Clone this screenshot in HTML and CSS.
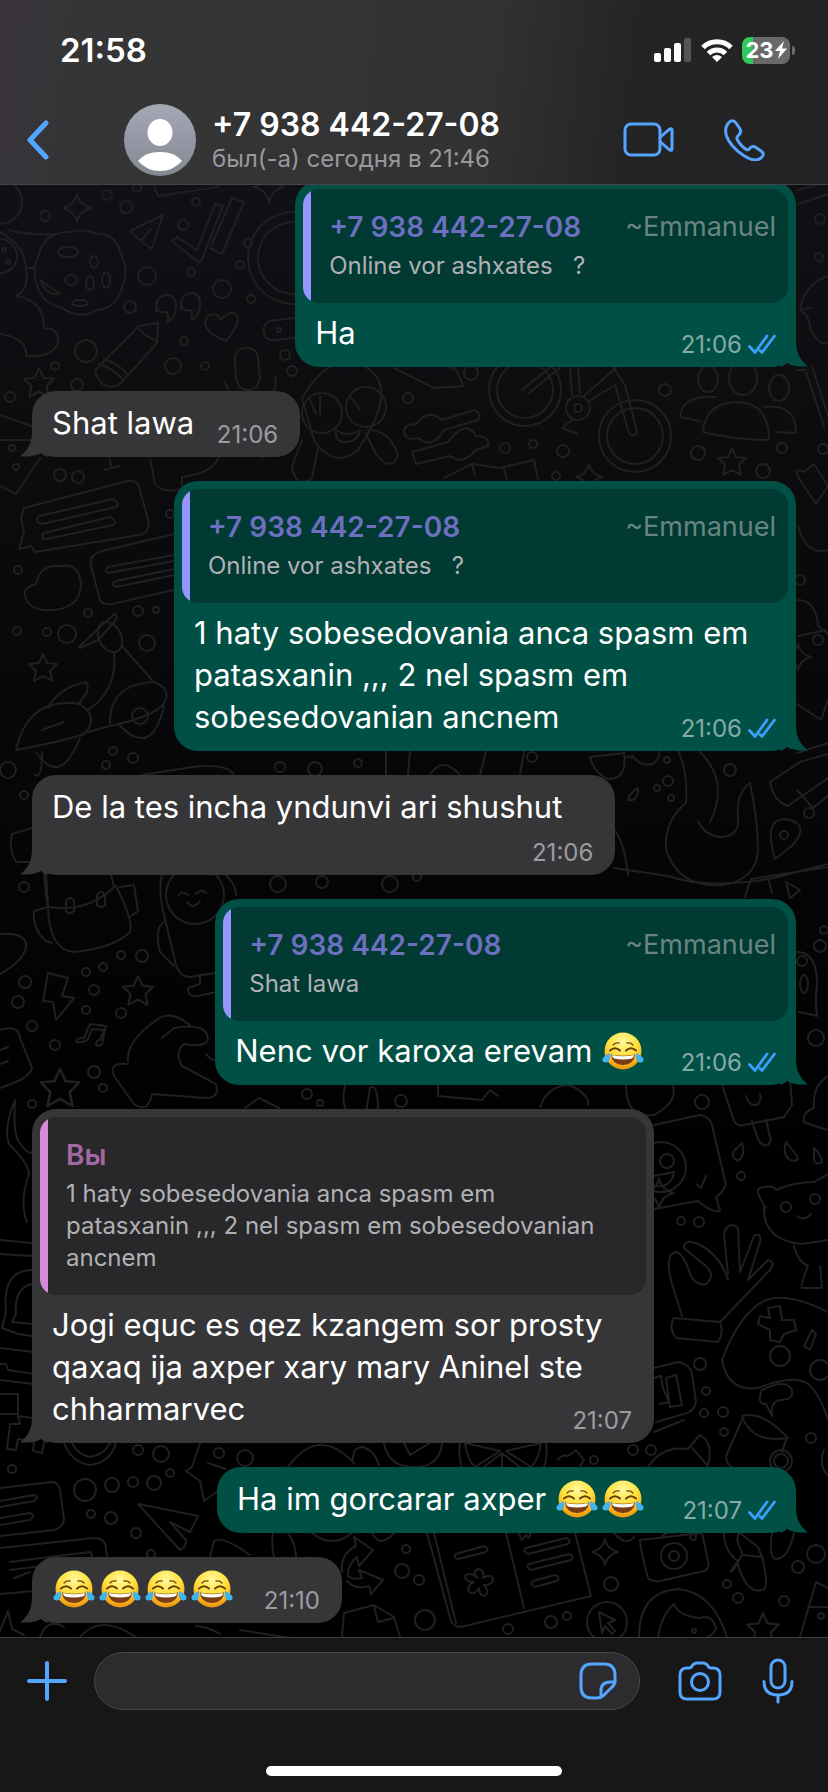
FILE: index.html
```
<!DOCTYPE html>
<html lang="ru">
<head>
<meta charset="utf-8">
<meta name="viewport" content="width=device-width, initial-scale=1">
<title>+7 938 442-27-08</title>
<link rel="stylesheet" href="styles.css">
</head>
<body>
<svg class="defs" width="0" height="0" aria-hidden="true">
  <defs>
    <radialGradient id="face" cx="50%" cy="25%" r="78%">
      <stop offset="0" stop-color="#fff9a0"/><stop offset=".5" stop-color="#fee13c"/><stop offset=".8" stop-color="#f9ae1c"/><stop offset="1" stop-color="#e08a0c"/>
    </radialGradient>
    <symbol id="joy" viewBox="0 0 46 42">
      <circle cx="22" cy="21" r="18.5" fill="url(#face)"/>
      <path d="M12 15q2-2.500 6-2M32 15q-2-2.500-6-2" fill="none" stroke="#7a4a08" stroke-width="1.4" stroke-linecap="round"/>
      <path d="M9 20.500q5-4.500 10 0M25 20.500q5-4.500 10 0" fill="none" stroke="#6a3c05" stroke-width="2" stroke-linecap="round"/>
      <path d="M10 24.500q12 2.500 24 0q-1 10.500-12 10.500T10 24.500z" fill="#7a3c12"/>
      <path d="M11 25q11 2.500 22 0q0 3-2 3.500q-9 2-18 0q-2-.5-2-3.500z" fill="#fff"/>
      <path d="M9 23q1 9-4 9.500q-4 0-3.500-3.500q1-3 7.500-6z" fill="#3fb4ee"/>
      <path d="M35 23q-1 9 4 9.500q4 0 3.500-3.500q-1-3-7.500-6z" fill="#3fb4ee"/>
    </symbol>
    <symbol id="ticks" viewBox="0 0 28 20">
      <path d="M1.500 12.500L7 18.500 19 2M12 16.500l2 2L26.500 2" fill="none" stroke="#3aa0fb" stroke-width="2.800" stroke-linecap="round" stroke-linejoin="round"/>
    </symbol>
    <symbol id="star" viewBox="-16 -16 32 32"><path d="M0-14l4 9 10 1-7 7 2 10-9-5-9 5 2-10-7-7 10-1z"/></symbol>
    <symbol id="spark" viewBox="-16 -16 32 32"><path d="M0-14q2 11 14 14q-12 3-14 14q-2-11-14-14q12-3 14-14z"/></symbol>
  </defs>
</svg>

<div class="screen">
  <header class="top">
    <div class="status">
      <time class="clock">21:58</time>
      <div class="indicators">
        <svg width="38" height="24" viewBox="0 0 38 24" aria-hidden="true"><g fill="#fff"><rect y="15" width="7" height="9" rx="2"/><rect x="10" y="10" width="7" height="14" rx="2"/><rect x="20" y="5" width="7" height="19" rx="2"/></g><rect x="30" width="7" height="24" rx="2" fill="#555556"/></svg>
        <svg width="32" height="24" viewBox="0 0 32 24" aria-hidden="true"><g fill="none" stroke="#fff" stroke-width="5"><path d="M2 9.500a20 20 0 0 1 28 0"/><path d="M7.500 15.500a12 12 0 0 1 17 0"/></g><path d="M16 24l-5-5q5-4 10 0z" fill="#fff"/></svg>
        <div class="battery"><span class="battery-level">23</span><svg width="12" height="18" viewBox="0 0 12 18" aria-hidden="true"><path d="M9 0L0 10h5L3 18l9-10.500H7z" fill="#fff"/></svg></div>
      </div>
    </div>
    <nav class="bar">
      <button class="icon back" aria-label="Назад"><svg width="24" height="40" viewBox="0 0 24 40"><path d="M20 3L4 20l16 17" stroke-width="5"/></svg></button>
      <svg class="avatar" viewBox="0 0 72 72" aria-hidden="true">
        <defs><linearGradient id="av" x2="0" y2="1"><stop stop-color="#a5a9b6"/><stop offset="1" stop-color="#838792"/></linearGradient></defs>
        <circle cx="36" cy="36" r="36" fill="url(#av)"/>
        <ellipse cx="36" cy="28.500" rx="12.500" ry="13.500" fill="#fff"/>
        <path d="M14 57q7-9 22-9t22 9q-9 10-22 10T14 57z" fill="#fff"/>
      </svg>
      <div class="contact">
        <h1>+7 938 442-27-08</h1>
        <p>был(-а) сегодня в 21:46</p>
      </div>
      <button class="icon video" aria-label="Видеозвонок"><svg width="52" height="36" viewBox="0 0 52 36"><rect x="2" y="2" width="35" height="31" rx="6"/><path d="M37 15.500L46 7.500q3-2 3 1v18q0 3-3 1L37 19.500"/></svg></button>
      <button class="icon" aria-label="Позвонить"><svg width="42" height="42" viewBox="0 0 42 42"><path d="M4 4.500C7 1 10 1 12 4l4 6c2 3 0 5-2 7-2 1.500-1 4 1 6.500 2 2.500 4 5 6.500 6.500 2 1.500 3 1 4.500-1 2-2 4-2 6-.5l5 3.500c3 2 3 4 .5 6.500-4 4-11 2.500-18-2C10 30 5 24 2.500 17 1 12 1.500 7.500 4 4.500z"/></svg></button>
    </nav>
  </header>

  <main class="chat">
    <svg class="doodles" viewBox="0 185 828 1452" preserveAspectRatio="xMidYMin slice" aria-hidden="true">
      <g>
        <circle cx="0" cy="202" r="22"/><path d="M8 230q25 6 50 4M0 232q26 14 26 38q4 18-10 26q28 4 28 32q16 0 14 16q-8 14-32 12q2-18-26-22M26 268h8"/>
        <circle cx="0" cy="256" r="17"/><circle cx="4" cy="250" r="2"/><circle cx="8" cy="262" r="2"/>
        <path d="M40 250q8-18 28-18q14-4 30 2q18 0 22 18q10 18 2 36q-6 20-24 22q-18 10-36-2q-18-4-24-20q-8-18 2-36z"/>
        <ellipse cx="68" cy="252" rx="10" ry="5"/><ellipse cx="94" cy="262" rx="4" ry="6"/><ellipse cx="71" cy="280" rx="6" ry="5"/><ellipse cx="90" cy="283" rx="4" ry="7"/><ellipse cx="106" cy="280" rx="4" ry="8"/><ellipse cx="80" cy="303" rx="8" ry="3"/><path d="M40 280l20 14q-14 2-20-14z"/>
        <path d="M130 231l33-16-11 34-10-7zM141 241l10-12M154 184l4 12 60-9 3-8M172 241l5-4 20 13 18-46 8 2-22 55-3 1zM212 244l20-46 12 4-22 52-12-6"/>
        <path d="M156 312q-1-17 11-17 10 1 9 13-1 11-9 14q3-10-2-10-9 2-9-9M181 310q-1-17 11-17 9 1 8 13-1 11-9 14q3-10-2-10-8 2-8-9"/>
        <path d="M95 370l44-44 19-3-1 20-37 41q-10 6-17 0t-8-14zM99 364q14 4 24 16M104 359q14 4 24 16M138 327q4 8 19 14"/>
        <path d="M226 341q-20-8-21-18 2-11 12-8 3 2 4 5 8-10 15-6 6 8-10 27z"/>
        <path d="M294 212a43 43 0 0 0 0 92M294 222a35 35 0 0 0 0 72M294 318l-24 3q-8 4-6 12 2 8 10 7l20-2"/><circle cx="279" cy="330" r="2"/>
        <path d="M235 360q0-12 11-12t12 10l2 20q-2 12-12 12t-12-12zM225 382q6 20 26 20t25-18l-1-8M262 458l6-26"/>
        <path d="M0 440h34M0 415l34 12M0 486l16 8 24-36M104 470l16-4M112 468l-4-14M150 460q4 14 4 22 6 12 28 7v-12q34-4 38-24"/>
        <path d="M24 508l100-26q12-4 15 5l10 36q0 10-10 12l-104 17-4-6-12 3 5-17-3-14zM39 516l74-17q8 4 3 8l-74 17q-8-2-3-8zM44 533l66-16q8 4 3 8l-66 14q-8 0-3-6zM174 534l-72 17q-14 4-11 15l9 34q3 5 12 4l66-15M174 555l-66 12q-4 4 0 6l66-12M174 569l-58 12q-6 3 0 6l58-12"/>
        <path d="M36 584q4-20 24-18 20-4 21 20-2 22-28 24-24 2-28-14-3-8 11-12z"/>
        <path d="M80 646l34-32q4 0 2 6l-18 20-18 8q-2-2 0-2z"/><ellipse cx="110" cy="637" rx="11" ry="16" transform="rotate(-28 110 637)"/><path d="M114 652q4 38-26 58M122 646l30 34M16 750q12-54 64-46 20 14 4 30-24 8-68 16zM48 708q10-20 38-26 6 8-8 22M110 726q-2-42 44-44 20 8 8 24-14 12-52 20M42 730l22-8M36 752q24 36 44-14M120 726q32 32 44-20M88 732l22-6"/>
        <circle cx="140" cy="716" r="8"/>
      </g>
      <g>
        <path d="M302 398q28-48 62-32q30 16 8 60l-14 24q-24 20-44-10zM302 440l-10 26q4 24 20 12l6-30M370 430q18 0 28 24-6 20-22 0l-10-20M336 430q12 8 24 0-2 12-14 12t-10-12M310 400l6 14M320 396v18M350 396l10 14"/><circle cx="322" cy="413" r="20"/><circle cx="366" cy="407" r="20"/>
        <path d="M394 368l40 20 30-2-8-16-12-6M404 430q2-6 12-6 12-16 26-4l32-10q8 2 4 10l-34 10q-12 20-26 8-14 4-14-8zM412 452l36-10q18-24 28-6 14 0 12 10l-12 4q-14 16-26 6l-34 8z"/>
        <circle cx="525" cy="390" r="36"/><circle cx="525" cy="390" r="28"/><circle cx="635" cy="436" r="36"/><circle cx="635" cy="436" r="28"/><circle cx="578" cy="408" r="12"/><circle cx="578" cy="408" r="4"/>
        <path d="M522 390l30-24M528 394l34-28M570 367l2 28M578 367l2 26M589 401l26-16 14 48q6 6 8-2l-12-46-12-18M584 396l34-30M572 420l-10 8 16 6"/>
        <ellipse cx="708" cy="379" rx="10" ry="13"/><ellipse cx="743" cy="378" rx="14" ry="17"/><ellipse cx="779" cy="388" rx="10" ry="13"/><path d="M703 432q2-30 36-30 30 2 30 38-34 0-66-8zM700 421l-20-4q2-22 36-20M764 407q32-4 32 26l-20-1M444 478l28-14 28 4 34-8 4 20M472 464l3 12M504 468l3 12"/>
        <path d="M798 190l30-8M798 204l30-10M800 310q4-26 28-34M800 310q10 6 10 18 10 20 18 14M800 310l12-2M806 372l18 54M812 366l16 50M796 370l10 0M800 480q-8-14 4-8l10-8 14 22-12 18zM798 526q8 30 30 24M798 600q18 0 20 26l10 8M798 636l28-6"/>
        <circle cx="800" cy="580" r="5"/><path d="M797 704l24 16 7-20M797 753l31-10M797 790l16 18 15-12"/>
      </g>
      <g>
        <path d="M590 757l34-4q4 26-16 26-14-6-18-22zM632 755q10 14 22 8 8-8 4-14M624 760q4-6 8-2M678 751q10 20 8 52-22 18-20 46 12 40 58 36 32-6 34-34 0-30-8-68-14 10-12 34 2 20-18 20-16-2-22-16"/>
        <path d="M700 752q30 30 10 70M770 782l30-20 28-8M770 782q4 20 18 24l40-28"/><circle cx="784" cy="835" r="4"/><path d="M775 859q-12-40 10-40 26 4 8 26zM628 800q2-8 10-12 0 14-10 12z"/>
        <path d="M614 830q10 10 14 45M614 868l54 8q40 14 106 2l54-14M745 897l6-18 77-12M768 878l4 15M786 882l14 8-10 8z"/>
        <path d="M42 752q0 30-8 22M142 775l50-8q40-4 42 10M386 751v24M410 751l-2 24M430 775q12-20 30 0M480 775l6-24M520 775l4-24"/>
        <path d="M32 828l-20 6q-4 14 4 28l16 0M44 871q2 30 4 36l-14 4q-2 18 12 30l6 2M48 907q40 6 66-20l-4-16M48 907l-2-36M48 910q2 40 26 42 40-4 56-20 4-10-14-46M120 887l14-2 4 26-8 6"/>
        <path d="M66 901q4-6 8 0v10q-4 4-8 0zM97 895q4-6 8 0v10q-4 4-8 0z"/>
        <circle cx="195" cy="895" r="29"/><path d="M178 896q4-6 10-1M196 894q6-6 10-1M187 902q6 8 13-1M162 875q-4 14 2 40l12 50q4 12 14 12l26-4M216 974v10M200 974v10l-12 4q0 10 10 8l18-4M164 922q-10 6-4 30l14 14M226 875q10 10 10 20"/>
        <path d="M48 973l20 5-6 18 12 2-18 22-3-18-10-1zM0 934q28-2 26 14-4 14-26 26M76 1042q0-4 8-4l6-14 16 2-4 18q-4 4-6 0 0-4 4-4l4-10-12-1-4 10q-4 4-12 3z"/>
        <path d="M128 1061q-2-20 30-42 14-10 34 8M162 1038l12-10q34-6 34 12-4 8-24 4-10 8-2 22l34 18q4 14-10 14l-54-4q-4 20-18 10l-20-28q-6-14 14-12M206 1054q6 8 14 6M0 1030q18-6 20 8l12 30q-2 8-16 14l-16 6M0 1050l8-3M0 1064l8-3"/>
        <path d="M15 1100q-12 30-6 44 20 20 20 30-10 28-2 48M15 1100q-2 34 4 42 10 14 13 10M0 1240l32 3M0 1254l32 2M245 1108l14-10 20 10M345 1086q-4 14 2 26M366 1112l4-24q8-6 8 24M438 1086v10l44 4 8-10 8 6"/>
        <path d="M497 1077h4M518 1070q2 4 20 4M540 1107q8-22 30-22 20 10 18 20M626 1085q0 34 28 30 26-14 18-32M722 1085l12 36q4 6 10 4l40-8 8-12-2-28M752 1121l6 18q4 8 10 6 4-4 2-8l-4-18M746 1096q4 12 12 8 4-4 2-10M828 1130q-14-4-24-8-2-10 10-14-2-22 14-32"/>
        <path d="M797 952q20 0 20 32-2 18 0 32l-18-4"/><ellipse cx="804" cy="984" rx="4" ry="9"/><circle cx="802" cy="961" r="5"/>
        <path d="M654 1125l46-10q10 2 12 10l14 60q-4 8-10 12l4 14q-8 2-22-10l-44 8"/><circle cx="661" cy="1167" r="25"/><circle cx="667" cy="1161" r="7"/><path d="M654 1176l20-4q-2 16-20 14M696 1184l5 4 5-12M742 1143l-8 8q-4 6 4 10 8-6 4-18zM786 1142q8 10 12 16 0 4-8 2-8-6-4-18zM814 1148q8 8 8 14-6 4-8-2z"/>
        <path d="M766 1208q-12-18-6-20 14-4 16 2 18-8 38-8l14-8M764 1206q-2 34 38 38l26-4M794 1246q4 16 14 20-8 20-6 22h20l-2-22"/><circle cx="786" cy="1207" r="5"/><circle cx="815" cy="1199" r="5"/><path d="M797 1216q6 6 14-2"/>
        <path d="M682 1316l-10-32q-8-30 4-32 8 2 14 22 6 12 16 10 10-8 0-18l-22-18q0-10 14-4 22 10 30 36M728 1274l-4-40q4-14 14-6l2 44 14-36q8-4 6 6l-12 38 20-20q8 2 2 10l-50 52M674 1318l46 4q4 10-2 20l-42-4q-8-10-2-20z"/>
        <path d="M828 1312q-40-20-62-12-26 12-44 60 6 32 36 28 36-14 50-4 12 10 20 36M768 1308l12-2 2 14 12 0 2 10-12 4-4 8-10-2v-10l-12-6 2-8 10 2z"/><circle cx="780" cy="1356" r="10"/><circle cx="820" cy="1370" r="10"/><path d="M804 1346l8-16 4 4-6 16z"/>
        <path d="M654 1368l24-6q12 2 14 12l4 28q-2 10-12 12l-28 8M654 1378l7-2 2 12 6 14-9 2M666 1378l10-3 6 30-12 2z"/>
        <path d="M772 1416l-6-12q-10 0-4-14 24-12 30 0 2 10-12 10-10 2-8 16M742 1416q20-6 46 22-36 6-46-22M742 1420l-16 36q0 8 6 11M786 1440l-4 12"/><circle cx="781" cy="1461" r="7"/><circle cx="781" cy="1461" r="11"/>
      </g>
      <g>
        <path d="M32 1270q-30 0-26 42l-4 16 16 6 14 2M32 1284q-18 4-16 30l-4 8 20 2M0 1348l34 4M0 1364h6l2 6 26 4M0 1380l34 4M0 1394h18v20H0M10 1424l10 0-2-8 14 2M10 1424l-3 25 9 1 2-11 16 2-1 10 9 2 2-10"/>
        <path d="M64 1443q8 20 26 22 20-2 26-22M72 1443q6 12 18 14 14-2 20-14M200 1443l-8 24-6 4 14 10 4 20 14-10M226 1469l-18-6"/>
        <path d="M288 1467q30-42 66-4M384 1443q4 24 30 24t28-24M404 1443l6 12 20-12M353 1459q0-12 10-12 12 4 16 18M460 1443q-2 14 2 24M546 1443q2 14-2 24M465 1443q2 16 10 24l25-16zM541 1443q-2 16-10 24l-25-16zM484 1467l18-14 18 14M502 1453v14M558 1460q4-6 10-4l8-6 8 10-4 6M648 1467q14-22 40-18l12-14q14 8 8 30M692 1448l16 18M654 1432l30-12M824 1450q-6 14 4 26"/>
        <path d="M138 1504l60 12-8 16-20-10 16 18q0 8-6 10zM0 1488l52-6q6 0 8 8l4 30q-2 8-10 10l-54 6M0 1501l34-6q6 2 0 6l-34 6M0 1518l30-5q6 2 0 7l-30 5M0 1548l94-10q12 0 12 12l2 12M10 1562l80-10q4 4 0 8l-80 10M14 1578l16-6M0 1594l34-3M210 1557l4-16q8-6 36 14M273 1533q-2 12 1 24M288 1533q8 12 8 24M312 1533q20 16 40 0M372 1533q8 16 22 0"/>
        <path d="M342 1572q-2-18 14-26l-2-9 19 13-14 16-2-9q-10 8-9 19 4 4 14 2l-3-8 24 10-12 14-2-8q-14 4-22-5M427 1533l24 88q4 8 14 5l126-30-16-63M434 1533l22 90M506 1533l18 75M456 1554l28-8q6 2 2 6l-28 7q-6-1-2-5zM526 1548l40-10q6 2 2 6l-40 10q-6-2-2-6zM529 1564l40-10q6 2 2 6l-40 10q-6-2-2-6zM533 1581l22-6q6 2 2 6l-22 6q-6-2-2-6zM518 1532l4 8 4-5 3 3 3-8"/>
        <path d="M478 1578q-7-6 0-9 7 1 5 9 8-5 10 1 0 6-9 6 6 7 1 11-6 0-6-8-5 8-10 4-3-6 5-10-9 0-9-6 4-5 13 2zM342 1637l2-24 30-8 20 12 6 20M374 1606l4 16 16-4"/>
        <path d="M0 1631l8-20 4 18 12 6M40 1637q8-20 24-10M80 1637q20-24 56 0M196 1626q10 0 24 8M240 1630l50 8M640 1540l62-7M640 1540q0 8 8 38 4 4 12 3l44-10q6-2 4-10l-6-28M662 1537q2-5 12-4M614 1533q12 14 20 4"/>
        <path d="M724 1533q0 18 14 28-12 16-4 8l8-14 20 2-4-10-18-14q-6 4 2 20M762 1556q8 34 0 34-16 4-24-26M772 1533q-4 24 4 26 12 0 18-26"/>
        <circle cx="674" cy="1556" r="13"/><circle cx="674" cy="1556" r="5"/><circle cx="607" cy="1622" r="20"/><path d="M599 1612l16 8-7 3 7 8-3 3-7-8-3 7zM639 1637q0-46 40-48 34 4 48 48M674 1604q-12 10-16 33M674 1604q4 12 26 14 12-4 16 10-2 6-8 9M816 1582l12 6M816 1582l-16 55M808 1607h20"/>
      </g>
      <g>
        <circle cx="107" cy="195" r="5"/><circle cx="126" cy="207" r="6"/><circle cx="45" cy="216" r="5"/><circle cx="183" cy="225" r="5"/><circle cx="147" cy="276" r="9"/><circle cx="191" cy="272" r="4"/><circle cx="222" cy="289" r="9"/><circle cx="251" cy="299" r="4"/><circle cx="130" cy="307" r="6"/><circle cx="248" cy="243" r="4"/><circle cx="240" cy="265" r="4"/><circle cx="196" cy="202" r="4"/><circle cx="137" cy="188" r="4"/><circle cx="86" cy="351" r="11"/><circle cx="184" cy="341" r="4"/><circle cx="173" cy="366" r="8"/><circle cx="205" cy="366" r="4"/><circle cx="55" cy="366" r="4"/><circle cx="77" cy="385" r="6"/><circle cx="10" cy="397" r="5"/><circle cx="285" cy="355" r="5"/><circle cx="292" cy="371" r="5"/><circle cx="12" cy="448" r="3"/><circle cx="16" cy="467" r="3"/><circle cx="60" cy="475" r="6"/><circle cx="78" cy="477" r="6"/>
        <circle cx="408" cy="398" r="5"/><circle cx="471" cy="373" r="7"/><circle cx="665" cy="390" r="6"/><circle cx="505" cy="448" r="5"/><circle cx="533" cy="444" r="4"/><circle cx="563" cy="451" r="6"/><circle cx="698" cy="453" r="7"/><circle cx="782" cy="448" r="5"/><circle cx="763" cy="471" r="7"/><circle cx="823" cy="449" r="5"/><circle cx="556" cy="476" r="4"/><circle cx="820" cy="219" r="5"/><circle cx="819" cy="257" r="4"/><circle cx="818" cy="640" r="5"/>
        <circle cx="18" cy="570" r="4"/><circle cx="170" cy="514" r="4"/><circle cx="88" cy="613" r="4"/><circle cx="138" cy="611" r="5"/><circle cx="156" cy="610" r="3"/><circle cx="17" cy="631" r="4"/><circle cx="47" cy="632" r="4"/><circle cx="67" cy="634" r="9"/><circle cx="147" cy="643" r="8"/><circle cx="133" cy="758" r="5"/><circle cx="113" cy="751" r="4"/><circle cx="106" cy="765" r="4"/><circle cx="8" cy="770" r="8"/><circle cx="280" cy="767" r="5"/><circle cx="315" cy="769" r="7"/><circle cx="358" cy="763" r="4"/>
        <circle cx="532" cy="757" r="5"/><circle cx="667" cy="760" r="3"/><circle cx="668" cy="781" r="5"/><circle cx="657" cy="788" r="3"/><circle cx="671" cy="798" r="3"/><circle cx="730" cy="770" r="6"/><circle cx="809" cy="813" r="5"/><circle cx="24" cy="795" r="4"/><circle cx="24" cy="887" r="5"/><circle cx="278" cy="884" r="8"/><circle cx="322" cy="882" r="6"/><circle cx="390" cy="884" r="8"/><circle cx="417" cy="877" r="4"/>
        <circle cx="25" cy="982" r="6"/><circle cx="18" cy="1002" r="6"/><circle cx="121" cy="955" r="4"/><circle cx="142" cy="956" r="6"/><circle cx="86" cy="972" r="4"/><circle cx="103" cy="967" r="4"/><circle cx="94" cy="990" r="5"/><circle cx="86" cy="1010" r="4"/><circle cx="121" cy="1013" r="5"/><circle cx="32" cy="1026" r="5"/><circle cx="55" cy="1045" r="5"/><circle cx="94" cy="1072" r="6"/><circle cx="103" cy="1088" r="4"/><circle cx="32" cy="1104" r="4"/><circle cx="307" cy="1094" r="5"/><circle cx="320" cy="1103" r="3"/><circle cx="401" cy="1101" r="6"/><circle cx="702" cy="1102" r="7"/><circle cx="741" cy="1176" r="4"/><circle cx="681" cy="1221" r="4"/><circle cx="699" cy="1222" r="5"/><circle cx="820" cy="946" r="6"/><circle cx="816" cy="1038" r="8"/><circle cx="824" cy="930" r="4"/>
        <circle cx="700" cy="1364" r="6"/><circle cx="706" cy="1391" r="4"/><circle cx="704" cy="1413" r="4"/><circle cx="723" cy="1412" r="5"/><circle cx="724" cy="1432" r="4"/><circle cx="811" cy="1438" r="5"/><circle cx="633" cy="1450" r="5"/><circle cx="651" cy="1450" r="5"/><circle cx="594" cy="1460" r="4"/><circle cx="12" cy="1469" r="4"/><circle cx="138" cy="1450" r="5"/><circle cx="161" cy="1454" r="8"/><circle cx="219" cy="1453" r="5"/><circle cx="245" cy="1458" r="8"/><circle cx="170" cy="1473" r="4"/><circle cx="85" cy="1490" r="11"/><circle cx="112" cy="1485" r="7"/><circle cx="133" cy="1482" r="5"/><circle cx="154" cy="1483" r="7"/><circle cx="91" cy="1514" r="4"/><circle cx="111" cy="1518" r="6"/><circle cx="136" cy="1533" r="5"/><circle cx="151" cy="1554" r="4"/><circle cx="406" cy="1549" r="4"/><circle cx="402" cy="1571" r="7"/><circle cx="419" cy="1580" r="5"/><circle cx="425" cy="1620" r="10"/>
        <circle cx="508" cy="1629" r="5"/><circle cx="551" cy="1622" r="6"/><circle cx="567" cy="1616" r="4"/><circle cx="611" cy="1584" r="7"/><circle cx="693" cy="1537" r="3"/><circle cx="727" cy="1584" r="4"/><circle cx="738" cy="1598" r="5"/><circle cx="784" cy="1601" r="5"/><circle cx="798" cy="1567" r="6"/><circle cx="816" cy="1554" r="9"/><circle cx="821" cy="1616" r="3"/><circle cx="694" cy="1631" r="2"/>
      </g>
      <g>
        <use href="#spark" x="61" y="192" width="32" height="32"/><use href="#spark" x="252" y="170" width="34" height="34"/><use href="#star" x="22" y="366" width="34" height="34"/><use href="#star" x="27" y="652" width="32" height="32"/><use href="#star" x="716" y="446" width="32" height="32"/><use href="#spark" x="574" y="462" width="30" height="30"/><use href="#spark" x="783" y="642" width="30" height="30"/><use href="#star" x="121" y="974" width="34" height="34"/><use href="#star" x="38" y="1066" width="44" height="44"/><use href="#spark" x="642" y="1176" width="34" height="34"/><use href="#spark" x="590" y="1537" width="30" height="30"/><use href="#star" x="745" y="1611" width="36" height="36"/>
      </g>
    </svg>

    <article class="bubble out">
      <blockquote class="quote">
        <div class="who"><b>+7 938 442-27-08</b><span>~Emmanuel</span></div>
        <p>Online vor ashxates &nbsp; ?</p>
      </blockquote>
      <div class="body"><p class="text">Ha</p><div class="meta"><time>21:06</time><svg class="ticks"><use href="#ticks"/></svg></div></div>
    </article>

    <article class="bubble in">
      <div class="body"><p class="text inline">Shat lawa</p><div class="meta"><time>21:06</time></div></div>
    </article>

    <article class="bubble out">
      <blockquote class="quote">
        <div class="who"><b>+7 938 442-27-08</b><span>~Emmanuel</span></div>
        <p>Online vor ashxates &nbsp; ?</p>
      </blockquote>
      <div class="body"><p class="text">1 haty sobesedovania anca spasm em patasxanin ,,, 2 nel spasm em sobesedovanian ancnem</p><div class="meta"><time>21:06</time><svg class="ticks"><use href="#ticks"/></svg></div></div>
    </article>

    <article class="bubble in">
      <div class="body"><p class="text above">De la tes incha yndunvi ari shushut</p><div class="meta"><time>21:06</time></div></div>
    </article>

    <article class="bubble out">
      <blockquote class="quote">
        <div class="who"><b>+7 938 442-27-08</b><span>~Emmanuel</span></div>
        <p>Shat lawa</p>
      </blockquote>
      <div class="body"><p class="text inline">Nenc vor karoxa erevam <svg class="emoji" role="img" aria-label="😂"><use href="#joy"/></svg></p><div class="meta"><time>21:06</time><svg class="ticks"><use href="#ticks"/></svg></div></div>
    </article>

    <article class="bubble in">
      <blockquote class="quote self">
        <div class="who"><b>Вы</b></div>
        <p>1 haty sobesedovania anca spasm em patasxanin ,,, 2 nel spasm em sobesedovanian ancnem</p>
      </blockquote>
      <div class="body"><p class="text">Jogi equc es qez kzangem sor prosty qaxaq ija axper xary mary Aninel ste chharmarvec</p><div class="meta"><time>21:07</time></div></div>
    </article>

    <article class="bubble out">
      <div class="body"><p class="text inline">Ha im gorcarar axper <svg class="emoji" role="img" aria-label="😂"><use href="#joy"/></svg><svg class="emoji" role="img" aria-label="😂"><use href="#joy"/></svg></p><div class="meta"><time>21:07</time><svg class="ticks"><use href="#ticks"/></svg></div></div>
    </article>

    <article class="bubble in">
      <div class="body"><p class="text inline"><svg class="emoji" role="img" aria-label="😂"><use href="#joy"/></svg><svg class="emoji" role="img" aria-label="😂"><use href="#joy"/></svg><svg class="emoji" role="img" aria-label="😂"><use href="#joy"/></svg><svg class="emoji" role="img" aria-label="😂"><use href="#joy"/></svg></p><div class="meta"><time>21:10</time></div></div>
    </article>
  </main>

  <footer class="composer">
    <div class="tools">
      <button class="icon" aria-label="Прикрепить"><svg width="40" height="40" viewBox="0 0 40 40"><path d="M20 2v36M2 20h36" stroke-width="4"/></svg></button>
      <div class="field">
        <input type="text" aria-label="Сообщение">
        <button class="icon" aria-label="Стикеры"><svg width="38" height="38" viewBox="0 0 38 38"><path d="M13 2h12q11 0 11 11v6q0 4-4 7l-8 8q-3 2-6 2h-5Q2 36 2 25V13Q2 2 13 2z"/><path d="M36 20h-5q-9 0-9 9v6"/></svg></button>
      </div>
      <button class="icon" aria-label="Камера"><svg width="44" height="40" viewBox="0 0 44 40"><path d="M2 14q0-7 7-7h2q2 0 3-2 2-3 5-3h6q3 0 5 3 1 2 3 2h2q7 0 7 7v17q0 7-7 7H9q-7 0-7-7z"/><circle cx="22" cy="21" r="8.500"/></svg></button>
      <button class="icon mic" aria-label="Голосовое сообщение"><svg width="32" height="46" viewBox="0 0 32 46"><rect x="9" y="2" width="14" height="28" rx="7"/><path d="M2 23.500q0 13.500 14 13.500t14-13.500M16 37v7"/></svg></button>
    </div>
    <div class="home"></div>
  </footer>
</div>
</body>
</html>
```
FILE: styles.css
```
* { box-sizing: border-box; }

body {
  margin: 0;
  background: #000;
  color: #fff;
  font-family: Inter, "Liberation Sans", sans-serif;
}

h1, p, blockquote { margin: 0; }

.defs { position: absolute; }

.screen {
  display: flex;
  flex-direction: column;
  height: 100vh;
}

/* Header */
.top {
  flex: none;
  position: relative;
  z-index: 1;
  height: 185px;
  border-bottom: 1px solid #454547;
  background: linear-gradient(97deg, #39343a 0%, #353537 9%, #343434 30%, #323232 58%, #242425 76%, #232325 100%);
}

.status {
  display: flex;
  justify-content: space-between;
  align-items: center;
  height: 100px;
  padding: 0 33px 0 60px;
}

.clock {
  font-size: 33px;
  font-weight: 600;
}

.indicators {
  display: flex;
  align-items: center;
  gap: 9px;
}

.battery {
  position: relative;
  display: flex;
  align-items: center;
  justify-content: center;
  gap: 1px;
  width: 48px;
  height: 27px;
  margin-right: 5px;
  border-radius: 8px;
  background: linear-gradient(90deg, #34c759 23%, #69696a 23%);
}

.battery::after {
  content: "";
  position: absolute;
  right: -5px;
  width: 3px;
  height: 9px;
  border-radius: 0 3px 3px 0;
  background: #69696a;
}

.battery-level {
  font-size: 22px;
  font-weight: 700;
}

.bar {
  display: flex;
  align-items: center;
  height: 80px;
  padding: 0 62px 0 26px;
}

.icon {
  display: flex;
  flex: none;
  padding: 0;
  border: 0;
  background: none;
}

.icon svg {
  fill: none;
  stroke: #54a5ff;
  stroke-width: 3;
  stroke-linecap: round;
  stroke-linejoin: round;
}

.avatar {
  width: 72px;
  height: 72px;
  margin: 0 16px 0 74px;
}

.contact {
  flex: 1;
  padding-top: 2px;
}

.contact h1 {
  font-size: 32px;
  font-weight: 600;
  line-height: 36px;
}

.contact p {
  color: #98989d;
  font-size: 24px;
  line-height: 32px;
}

.video { margin-right: 49px; }

/* Conversation */
.chat {
  flex: 1;
  position: relative;
  display: flex;
  flex-direction: column;
  justify-content: flex-end;
  gap: 24px;
  min-height: 0;
  padding: 0 32px 14px;
  overflow: hidden;
  background: linear-gradient(#111115, #08080a 35%, #000 70%);
}

.doodles {
  position: absolute;
  inset: 0;
  width: 100%;
  height: 100%;
  fill: none;
  stroke: #202022;
  stroke-width: 2;
  stroke-linejoin: round;
  stroke-linecap: round;
}

.bubble {
  position: relative;
  flex: none;
  max-width: 622px;
  border-radius: 24px;
}

.bubble::after {
  content: "";
  position: absolute;
  bottom: 0;
  width: 36px;
  height: 32px;
  background: inherit;
  clip-path: path("M24 0V6C24 18 28 25 36 31.500C28 32 20 31 15 28C13 30 11 31 8 32Z");
}

.out {
  align-self: flex-end;
  background: #005045;
}

.out::after { right: -12px; }

.in {
  align-self: flex-start;
  background: #363638;
}

.in::after {
  left: -12px;
  transform: scaleX(-1);
}

.quote {
  margin: 0 8px;
  padding: 20px 12px 21px 26px;
  border-radius: 16px;
  background: linear-gradient(90deg, #9595ff 8px, #003a33 8px);
}

.quote.self { background: linear-gradient(90deg, #d68ad9 8px, #28282a 8px); }

.bubble:has(.quote) { padding-top: 8px; }

.who {
  display: flex;
  justify-content: space-between;
  gap: 44px;
  margin-bottom: 5px;
  font-size: 28px;
  line-height: 36px;
}

.who b {
  color: #6d6fc0;
  font-weight: 600;
}

.who span {
  color: #6a8581;
  font-size: 27px;
}

.self b { color: #a468a5; }

.quote p {
  padding-right: 20px;
  color: #b1b1b5;
  font-size: 24px;
  line-height: 32px;
}

.body {
  display: grid;
  padding: 11px 20px 13px;
}

.quote + .body { padding-top: 9px; }

.text {
  grid-area: 1 / 1;
  font-size: 31px;
  line-height: 42px;
}

.in .inline { padding-right: 86px; }

.out .inline { padding-right: 129px; }

.above { padding: 0 33px 34px 0; }

.meta {
  grid-area: 1 / 1;
  place-self: end;
  display: flex;
  align-items: center;
  gap: 6px;
  height: 30px;
  margin-bottom: -5px;
  color: #9c9ca1;
  font-size: 24px;
}

.in .meta { padding-right: 2px; }

.out .meta { color: #86aaa5; }

.ticks {
  flex: none;
  width: 28px;
  height: 20px;
}

.emoji {
  width: 46px;
  height: 42px;
  vertical-align: top;
}

/* Composer */
.composer {
  flex: none;
  display: flex;
  flex-direction: column;
  align-items: center;
  height: 155px;
  border-top: 1px solid #3d3d3f;
  background: #171717;
}

.tools {
  display: flex;
  align-items: center;
  width: 100%;
  padding: 14px 34px 0 27px;
}

.field {
  flex: 1;
  display: flex;
  align-items: center;
  min-width: 0;
  height: 58px;
  margin: 0 38px 0 27px;
  padding: 0 22px;
  border: 1px solid #474749;
  border-radius: 29px;
  background: #2c2c2e;
}

.field input {
  flex: 1;
  width: 0;
  min-width: 0;
  border: 0;
  outline: 0;
  background: none;
  color: #fff;
  font: inherit;
  font-size: 31px;
}

.mic { margin-left: 40px; }

.home {
  width: 296px;
  height: 10px;
  margin-top: 56px;
  border-radius: 5px;
  background: #fff;
}
```
